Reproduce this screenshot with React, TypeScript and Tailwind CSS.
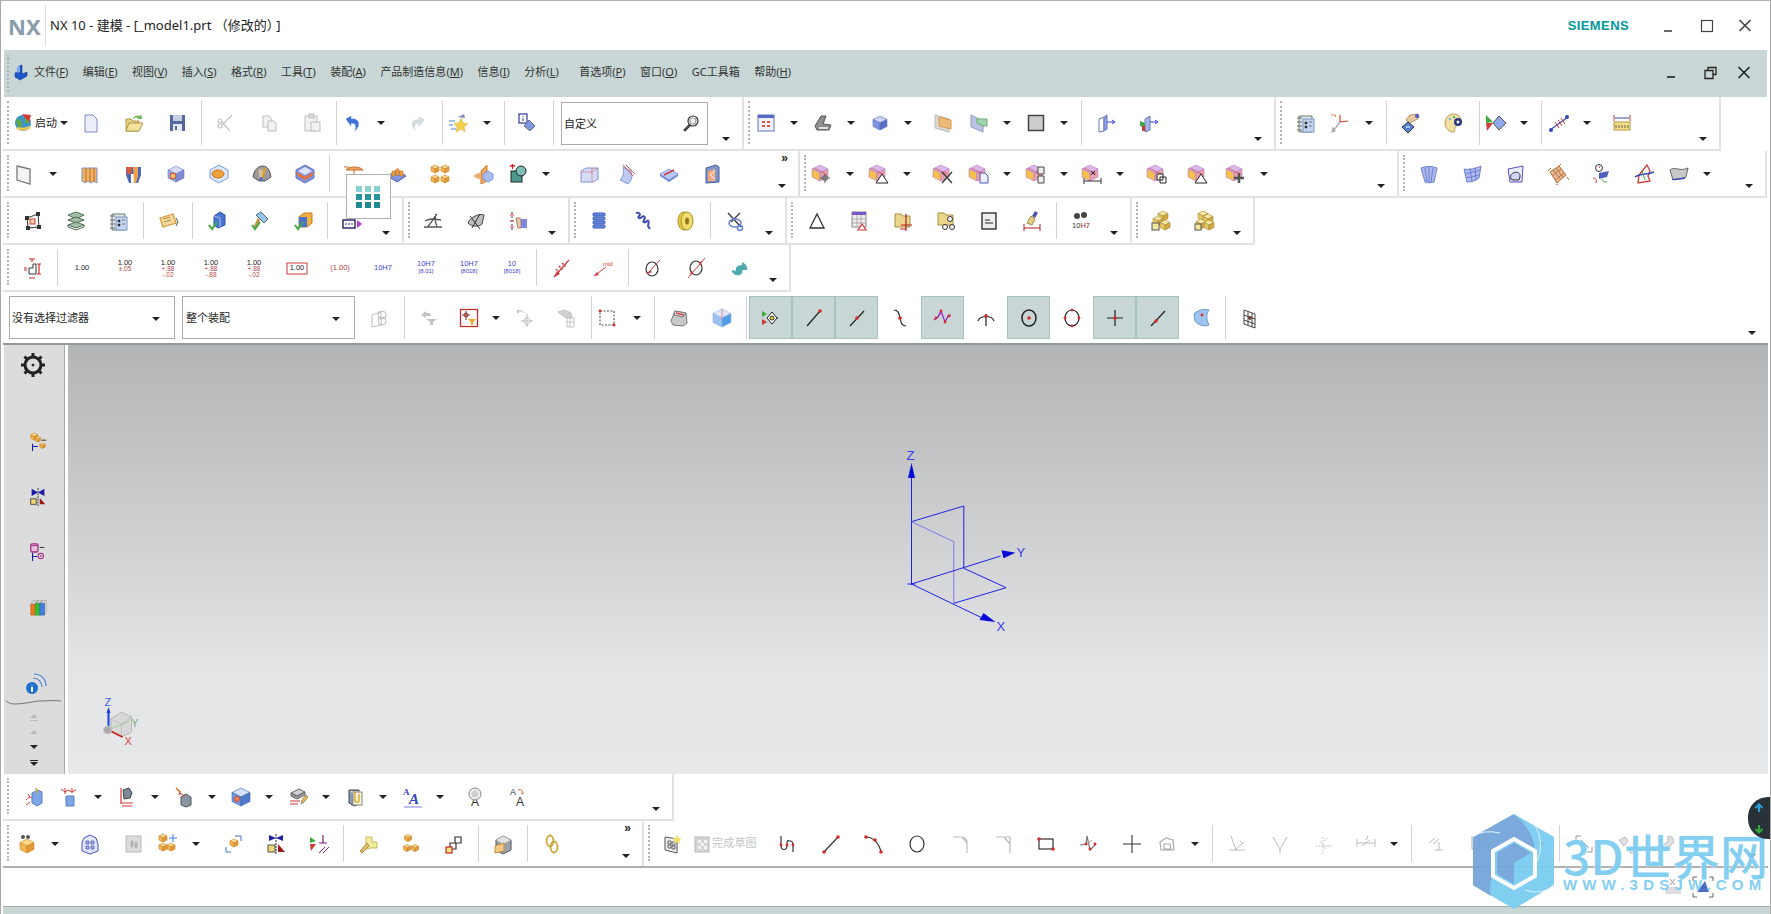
import type { ReactNode } from "react";

// flat colours used by most of the little bitmaps
const BL = "#7f96e0";
const BD = "#5a6fc4";
const BG = "#c9d4f6";
const RD = "#cf3b3b";
const GN = "#3fa93f";

function Cube({ x = 11, y = 11, s = 7, t = BG, l = BL, r = BD, st = BD }: { x?: number; y?: number; s?: number; t?: string; l?: string; r?: string; st?: string }) {
  const h = s / 2;
  return (
    <g stroke={st} strokeWidth="0.6" strokeLinejoin="round">
      <polygon fill={t} points={`${x},${y - s} ${x + s},${y - h} ${x},${y} ${x - s},${y - h}`} />
      <polygon fill={l} points={`${x - s},${y - h} ${x},${y} ${x},${y + s} ${x - s},${y + h}`} />
      <polygon fill={r} points={`${x + s},${y - h} ${x},${y} ${x},${y + s} ${x + s},${y + h}`} />
    </g>
  );
}

const OrangeCube = (x: number, y: number, s: number) => <Cube x={x} y={y} s={s} t="#fbd98a" l="#f3b552" r="#e39a35" st="#c9842a" />;
const YellowCube = (x: number, y: number, s: number) => <Cube x={x} y={y} s={s} t="#f7e9a5" l="#e8c860" r="#d2a93f" st="#a58a3a" />;

function Pc({ children }: { children?: ReactNode }) {
  return (
    <g>
      <Cube x={9} y={10} s={8} t="#d9b8ea" l="#f5c04e" r="#e8a0b0" st="#b67ac8" />
      <path d="M3 5l12 6" stroke={RD} strokeWidth="0.7" />
      {children}
    </g>
  );
}

const Check = <path d="M3 15l3 4 5-7" stroke={GN} strokeWidth="2" fill="none" />;
const Dot = (x: number, y: number, r = 1.4, c = "#d62a2a") => <circle cx={x} cy={y} r={r} fill={c} />;

function Dim({ a, b, c, box, color = "#222" }: { a: string; b?: string; c?: string; box?: boolean; color?: string }) {
  const y = b ? 8 : 13;
  return (
    <g fontFamily="Liberation Sans, sans-serif" textAnchor="middle">
      {box && <rect x="1" y="6" width="20" height="11" fill="none" stroke={RD} strokeWidth="1" />}
      <text x="11" y={y} fontSize="7.5" fill={color}>{a}</text>
      {b && <text x="11" y="14" fontSize="6.5" fill="#b04848">{b}</text>}
      {c && <text x="11" y="20" fontSize="6.5" fill="#b04848">{c}</text>}
    </g>
  );
}

const ICONS: Record<string, ReactNode> = {
  // row 1
  globe: (
    <g>
      <circle cx="10" cy="11" r="8" fill="#3f93c9" />
      <path d="M3 8c3-2 5 0 6 3s-2 6-4 5M12 4c3 1 5 5 4 8l-4-1z" fill="#5fa84a" />
      <path d="M9 2l9 1-2 7z" fill="#d8382f" />
      <path d="M3 17c5 3 11 2 15-1l-2-2c-4 2-8 2-11 1z" fill="#e9c85d" />
    </g>
  ),
  doc: <path d="M5 3h8l4 4v13H5z" fill="#eceefc" stroke="#7f86c9" />,
  open: (
    <g>
      <path d="M3 7h5l2 2h6v10H3z" fill="#e6cf80" stroke="#b09a4a" />
      <path d="M3 19l3-8h14l-4 8z" fill="#f3e19e" stroke="#b09a4a" />
      <path d="M10 6c2-3 5-3 7-2l1-2 1 5-5 0 1-1c-2-1-4 0-5 1z" fill="#73b35a" />
    </g>
  ),
  save: (
    <g>
      <rect x="4" y="3" width="15" height="16" fill="#56699f" />
      <rect x="7" y="3" width="9" height="6" fill="#c6cfe6" />
      <rect x="7" y="12" width="9" height="7" fill="#e7eaf4" />
      <rect x="9" y="14" width="2" height="4" fill="#56699f" />
    </g>
  ),
  cut: (
    <g stroke="#c4c4c4" fill="none" strokeWidth="1.2">
      <circle cx="5" cy="14" r="2" />
      <circle cx="5" cy="9" r="2" />
      <path d="M7 13l10-10M7 10l8 9" />
    </g>
  ),
  copy: (
    <g stroke="#bdbdbd" fill="#f2f2f2">
      <path d="M5 4h6l2 2v9H5z" />
      <path d="M10 9h6l2 2v8h-8z" />
    </g>
  ),
  paste: (
    <g stroke="#bdbdbd" fill="#f2f2f2">
      <rect x="4" y="4" width="12" height="15" />
      <rect x="8" y="2" width="5" height="4" fill="#dcdcdc" />
      <rect x="10" y="10" width="9" height="9" />
    </g>
  ),
  undo: <path d="M4 7l5-3v3c6-1 9 3 7 8l-3 4c1-3 2-8-4-8v3z" fill="#3d73d6" stroke="#6b96e6" strokeWidth=".5" />,
  redo: <path d="M18 8l-5-3v3C8 7 5 10 7 15l2 3c-1-3-1-7 4-7v3z" fill="#d6dde0" stroke="#c4c4c4" strokeWidth=".5" />,
  star: (
    <g>
      <path d="M13 6l2 5 5 .5-4 3.5 1 5-4-3-5 3 1-5-3-3.5 5-.5z" fill="#f3d24e" stroke="#d3ad2e" strokeWidth=".5" />
      <path d="M1 9h6M1 13h4M3 17h5" stroke="#7fb1e2" strokeWidth="1.5" />
      <path d="M10 5l6-3 1 4z" fill="#8a86c6" />
    </g>
  ),
  itag: (
    <g>
      <rect x="3" y="2" width="8" height="9" fill="#fff" stroke="#2d3a9c" strokeWidth="1.2" />
      <path d="M7 4v1M7 6v3" stroke="#2d3a9c" />
      <path d="M13 8l6 6-5 5-6-5z" fill="#7f96e0" stroke="#6a6a7a" />
    </g>
  ),
  fit: (
    <g>
      <rect x="3" y="3" width="16" height="16" fill="#eef1fd" stroke="#6072c0" />
      <rect x="3" y="3" width="16" height="3" fill="#5168c8" />
      <path d="M7 9h3v2H7zM12 9h3v2h-3zM7 13h3v2H7zM12 13h3v2h-3z" fill="#e8503f" />
    </g>
  ),
  scan: (
    <g>
      <path d="M3 14L9 4h5l-3 8 8 1-2 5H5z" fill="#8f8f8f" stroke="#555" />
      <path d="M7 15h9v2H7z" fill="#e0e0e0" />
    </g>
  ),
  cube: <Cube />,
  planeO: (
    <g>
      <path d="M3 3l14 4v13L3 16z" fill="#d8d8d8" stroke="#bbb" />
      <path d="M7 5l12 3v9L7 14z" fill="#eeb978" stroke="#d69a55" />
    </g>
  ),
  planeG: (
    <g>
      <path d="M3 3l12 6v11L3 15z" fill="#b9c3e2" stroke="#8f9ac0" />
      <path d="M9 7h10v7h-4l-6-3z" fill="#9fd6a8" stroke="#6ea97a" />
    </g>
  ),
  graysq: <rect x="3.5" y="3.5" width="15" height="15" fill="#cccccc" stroke="#444" strokeWidth="1.5" />,
  door1: (
    <g>
      <path d="M4 7l5-2v14l-5 1z" fill="#fff" stroke="#6a78b8" />
      <path d="M9 5l3-2v14l-3 2z" fill="#8ea0e8" stroke="#6a78b8" />
      <path d="M12 10h7M17 8l3 2-3 2" stroke="#3b3be0" fill="none" />
    </g>
  ),
  door2: (
    <g>
      <path d="M7 7l5-3v14l-5 2z" fill="#a3b3ee" stroke="#6a78b8" />
      <path d="M2 9l5 2v5l-5-2z" fill={GN} />
      <path d="M4 14h3v5H4z" fill={RD} />
      <path d="M12 10h7M17 8l3 2-3 2" stroke="#3b3be0" fill="none" />
    </g>
  ),
  list: (
    <g>
      <path d="M4 4h13v16H4z" fill="#dfe5ef" stroke="#6b7f6b" />
      <rect x="8" y="7" width="11" height="13" fill="#c4d3f0" stroke="#7f96c0" />
      <path d="M10 10h2v2h-2zM14 10h3M10 14h2v2h-2zM14 14h3" stroke="#555" strokeWidth=".7" />
      <path d="M2 6h5M2 10h5M2 14h5M2 18h5" stroke="#666" />
    </g>
  ),
  csys: (
    <g fill="none" strokeWidth="1.2">
      <path d="M11 10v-7M11 10l8-1" stroke="#d8402e" />
      <path d="M11 10l-6 8" stroke="#999" />
      <path d="M3 20l3-1-2-3z" fill="#aaa" stroke="#aaa" />
      <path d="M2 3h4l1 2" stroke="#e08a50" />
    </g>
  ),
  pdia: (
    <g>
      <path d="M10 3l8-1 1 4-9 5-4-3z" fill="#e9c9a0" stroke="#b59060" />
      <circle cx="17" cy="4" r="2" fill="#4e58c6" />
      <path d="M8 10l6 5-6 6-6-6z" fill="#5880d6" stroke="#334" />
      <path d="M6 15h4" stroke="#fff" />
    </g>
  ),
  palette: (
    <g>
      <path d="M10 2c6 0 9 4 8 9-1 3-5 2-6 4s1 5-2 5-8-3-8-9c0-5 4-9 8-9z" fill="#f0dfa4" stroke="#bb9c4a" />
      <circle cx="15" cy="10" r="4" fill="#2c3a86" />
      <circle cx="15" cy="10" r="1.5" fill="#fff" />
      <circle cx="7" cy="7" r="1.2" fill="#6cb7e0" />
      <circle cx="11" cy="5" r="1.2" fill="#62b76c" />
    </g>
  ),
  adia: (
    <g>
      <path d="M1 3l7 7-7 1z" fill={GN} />
      <path d="M1 11l7 0-6 8z" fill={RD} />
      <path d="M14 4l7 7-7 7-6-7z" fill="#8ea8ea" stroke="#555" />
    </g>
  ),
  dist: (
    <g>
      <path d="M2 18L20 5" stroke="#3346b8" strokeWidth="1.2" />
      <path d="M7 10l4 6M10 8l4 6M13 6l4 6" stroke={RD} />
      <circle cx="3" cy="18" r="2" fill="#3346b8" />
      <circle cx="19" cy="5" r="2" fill="#3346b8" />
    </g>
  ),
  ruler: (
    <g>
      <rect x="3" y="10" width="16" height="8" fill="#f4de8a" stroke="#b99b44" />
      <path d="M5 13v3M8 13v3M11 13v3M14 13v3M17 13v3" stroke="#333" strokeWidth=".7" />
      <path d="M3 3v6M19 3v6" stroke={RD} />
      <path d="M4 6h14" stroke="#3346b8" />
    </g>
  ),
  // row 2
  plane: <path d="M3 3l13 3v15L3 17z" fill="#f2f4f0" stroke="#777" strokeWidth="1.3" />,
  ribs: (
    <g>
      <path d="M3 5h15v15l-3-2-3 2-3-2-3 2-3-2z" fill="#f2b264" stroke="#7b93cf" />
      <path d="M7 5v14M11 5v14M15 5v14" stroke="#b96d26" />
    </g>
  ),
  shell: (
    <g>
      <path d="M4 4h15v8l-3 8h-4v-9H9v9H7L4 12z" fill="#4f68b8" />
      <path d="M11 4h5v9l-2 7h-2z" fill="#f0a24a" />
      <path d="M4 4h6l-1 7H5z" fill="#d85a3a" />
    </g>
  ),
  hole: (
    <g>
      <Cube s={8} t="#d6dcf6" l="#9aa8e6" r="#7e8cd6" st="#6c78c0" />
      <circle cx="8" cy="13" r="3" fill="#f0c06a" stroke={RD} />
    </g>
  ),
  hexO: (
    <g>
      <path d="M11 2l9 5v8l-9 5-9-5V7z" fill="#dce8fa" stroke="#7f9ee0" />
      <ellipse cx="10" cy="11" rx="6" ry="4" fill="#f2a03c" stroke="#c8701e" />
    </g>
  ),
  gauge: (
    <g>
      <path d="M2 14C3 6 8 3 12 3s7 4 8 11l-6 4H8z" fill="#9a9a9a" stroke="#555" />
      <path d="M8 6l4 1 0 9H8z" fill="#d8c0a0" />
      <path d="M14 5l-3 11" stroke="#e0a020" strokeWidth="2" />
      <circle cx="10" cy="16" r="2" fill="#5a70c8" />
    </g>
  ),
  chev: (
    <g>
      <path d="M11 2l9 5v8l-9 5-9-5V7z" fill="#8293dd" stroke="#6272c0" />
      <path d="M11 4l7 4-7 4-7-4z" fill="#dfe4fa" />
      <path d="M3 9l8 5 8-5v3l-8 5-8-5z" fill="#ec6f30" />
    </g>
  ),
  umbrella: (
    <g>
      <path d="M3 7c3-4 14-4 17 0z" fill="#f2a060" stroke="#c8702e" />
      <path d="M11 7v9" stroke="#c8702e" />
      <path d="M8 15h6l-3 5z" fill="#e85a30" />
      <path d="M1 4h5" stroke="#c8702e" />
    </g>
  ),
  bumps: (
    <g>
      <path d="M2 13l9-6 9 6-9 6z" fill="#7f96e0" stroke="#4a5ab0" />
      <path d="M6 8h3v5H6zM10 6h3v6h-3zM14 8h3v5h-3z" fill="#f2a03c" stroke="#c4741e" strokeWidth=".6" />
    </g>
  ),
  four: (
    <g>
      {OrangeCube(6, 6, 4)}
      {OrangeCube(16, 6, 4)}
      {OrangeCube(6, 16, 4)}
      {OrangeCube(16, 16, 4)}
    </g>
  ),
  halves: (
    <g>
      <path d="M9 8l6-6v16l-6 3z" fill="#f2a660" stroke="#d07a30" />
      <path d="M2 12l7-3v8l-7-3z" fill="#f0b070" />
      <path d="M11 11l5-3 5 3v5l-5 3-5-3z" fill="#a8bcee" stroke="#7f96e0" />
    </g>
  ),
  seed: (
    <g>
      <rect x="3" y="8" width="11" height="11" fill="#4a9a90" stroke="#222" />
      <circle cx="13" cy="8" r="5" fill="#7cc0b8" stroke="#222" />
      <path d="M2 3h5M4.500 1v5" stroke="#d82020" strokeWidth="1.3" />
    </g>
  ),
  boxred: (
    <g>
      <path d="M3 8l5-3h12v11l-5 3H3z" fill="#d3dcf8" stroke="#7f8fd8" />
      <path d="M14 5v14M20 5l-6 4H3" stroke="#e06060" strokeDasharray="1.500 1" fill="none" />
    </g>
  ),
  sail: (
    <g>
      <path d="M5 17c4-4 4-9 3-13l8 4c2 5 1 9-3 13z" fill="#bccaf4" stroke="#7f96e0" />
      <path d="M8 2l10 11M11 2l9 9" stroke="#d85a50" />
    </g>
  ),
  slab: (
    <g>
      <path d="M2 11l9-5 9 5-9 6z" fill="#b9c8f4" stroke="#8f9fe0" />
      <path d="M6 12l10-5" stroke={RD} strokeWidth="1.5" />
      <path d="M2 11v2l9 6 9-6v-2l-9 6z" fill="#6f86dc" />
    </g>
  ),
  frame: (
    <g>
      <path d="M5 5l10-3 3 2v15l-13 1z" fill="#7f96cc" stroke="#4a5a9a" />
      <path d="M7 8l7-2v12H7z" fill="#f4a878" />
      <path d="M14 8l-5 4 5 4" stroke="#fff" fill="none" />
    </g>
  ),
  pcMove: <Pc><path d="M14 11v9M9 15h10M12 13h4v4h-4z" stroke="#555" fill="#fff" /></Pc>,
  pcTri: <Pc><path d="M14 11l6 9H8z" fill="#fff" stroke="#222" /></Pc>,
  pcX: <Pc><path d="M10 9l10 11M20 9L10 20" stroke="#444" strokeWidth="1.5" /></Pc>,
  pcDoc: <Pc><path d="M12 10h5l3 3v7h-8z" fill="#eef" stroke="#4a5ab0" /></Pc>,
  pcBox: <Pc><path d="M13 4h6v7h-6zM13 13h6v7h-6z" fill="#eee" stroke="#444" /></Pc>,
  pcDim: <Pc><path d="M3 18h17M3 15v6M20 15v6" stroke="#333" /><path d="M10 8l4 4M14 8l-4 4" stroke="#333" /></Pc>,
  pcFrame: <Pc><path d="M11 11h6v6h-6zM14 14h6v6h-6z" fill="#fff" stroke="#222" /></Pc>,
  pcPlus: <Pc><path d="M14 10v10M9 15h10" stroke="#555" strokeWidth="2.500" /></Pc>,
  sf1: (
    <g>
      <path d="M3 5c5-2 11-2 16 0l-3 14c-3 1-6 1-9 0z" fill="#aab8ee" stroke="#6f80cc" />
      <path d="M7 5l2 14M11 4v15M15 5l-2 14" stroke="#5a6cc0" strokeWidth=".7" />
    </g>
  ),
  sf2: (
    <g>
      <path d="M3 6c5 1 11 0 17-3l-2 12c-3 3-9 4-12 4z" fill="#aab8ee" stroke="#6f80cc" />
      <path d="M4 11l15-4M5 15l13-3M9 5l2 14M14 4l1 13" stroke="#5a6cc0" strokeWidth=".7" />
    </g>
  ),
  sf3: (
    <g>
      <path d="M4 6l15-3-1 16H6z" fill="#e7ebfb" stroke="#5a4fcf" />
      <path d="M7 16c-3-7 10-10 9-2l-1 3H9z" fill="#cfd6f6" stroke="#333" />
    </g>
  ),
  mesh: (
    <g>
      <path d="M3 9l9-6 7 9-9 8z" fill="#e8b88e" stroke="#b07040" />
      <path d="M6 7l7 9M9 5l7 9M5 13l9-7M8 17l9-7" stroke="#a05a30" strokeWidth=".7" />
      <path d="M1 8l3-3M20 14l2 3M11 21l-2 1M14 1l-2 2" stroke="#e06020" />
    </g>
  ),
  tool: (
    <g>
      <circle cx="9" cy="5" r="3.500" fill="#fff" stroke="#333" />
      <path d="M9 5l1-2" stroke={RD} />
      <path d="M9 10l10-2-2 6-8 2z" fill="#5060c0" />
      <path d="M3 15c3 0 4 2 3 5" stroke={RD} fill="none" />
      <path d="M12 16c1 3 3 3 5 3" stroke={GN} fill="none" />
    </g>
  ),
  rbl: (
    <g>
      <path d="M5 20l1-8 8-10 3 6-2 5 2 5z" fill="#fff" stroke={RD} strokeWidth="1.300" />
      <path d="M2 14c6-4 12-2 19-5" stroke="#3346b8" strokeWidth="1.500" fill="none" />
      <path d="M9 8l3 9" stroke={GN} />
    </g>
  ),
  wave: (
    <g>
      <path d="M2 7c5-4 10 2 18-2l-2 9c-4 4-9 0-13 3z" fill="#c8c8c8" stroke="#666" />
      <path d="M4 16c4 2 8-1 13-1" stroke="#3346b8" strokeWidth="1.300" fill="none" />
    </g>
  ),
  // row 3
  nodes: (
    <g>
      <path d="M5 8l11-4 1 13-11 1z" fill="none" stroke="#333" />
      <path d="M3 6h4v4H3zM14 2h4v4h-4zM15 15h4v4h-4zM4 16h4v4H4z" fill="#333" />
      <rect x="8" y="9" width="5" height="5" fill="#f6d2a6" stroke={RD} />
    </g>
  ),
  stack: (
    <g fill="#a4bfa6" stroke="#4e6a58">
      <path d="M3 5l8-3 8 3-8 4z" />
      <path d="M3 10l8 3 8-3-8-3z" />
      <path d="M3 15l8 3 8-3-8-3z" />
      <path d="M3 15v2l8 3 8-3v-2" fill="none" />
    </g>
  ),
  ticket: (
    <g>
      <path d="M3 8l13-4 3 9-13 4z" fill="#f5d8a0" stroke="#d69a3a" strokeWidth="1.300" />
      <path d="M6 9l7-2M7 12l7-2" stroke="#b08a40" />
      <path d="M19 8l2 4-2 4" stroke="#555" fill="none" />
    </g>
  ),
  chk1: (
    <g>
      <path d="M8 6l6-4 5 3v10l-7 3-4-3z" fill="#4a74d0" stroke="#2e4fa8" />
      <path d="M8 6l6 2v9" stroke="#a8c0f0" fill="none" />
      {Check}
    </g>
  ),
  chk2: (
    <g>
      <path d="M7 5l5-3 7 7-4 4z" fill="#9cc4e6" stroke="#4a6a90" />
      <path d="M10 9l-4 8" stroke="#c8924a" strokeWidth="3" />
      {Check}
    </g>
  ),
  chk3: (
    <g>
      <path d="M7 7l5-4h8v10l-5 4H7z" fill="#f2b13c" stroke="#c07c20" />
      <path d="M7 7h8v10H7z" fill="#4a74d0" />
      {Check}
    </g>
  ),
  term: (
    <g>
      <path d="M4 3l3 5h8l-2-5z" fill="#f0c460" />
      <rect x="2" y="10" width="12" height="8" fill="#fff" stroke="#2a2a70" strokeWidth="1.500" />
      <path d="M4 14h2M7 14h2M10 14h2" stroke="#2a2a70" />
      <path d="M16 10l5 4-5 4z" fill="#b040d0" />
    </g>
  ),
  a1: <path d="M2 17h18M6 16c3-2 6-9 9-12M14 4c-1 4-1 9 1 12M3 11c5-3 10-2 16-1" stroke="#555" strokeWidth="1.300" fill="none" />,
  a2: (
    <g>
      <path d="M3 13c2-6 12-10 16-8l-2 9c-3 3-10 3-14-1z" fill="#c0c0c0" stroke="#444" />
      <path d="M5 6l10 13M15 4L7 18" stroke="#333" />
    </g>
  ),
  hand: (
    <g>
      <path d="M4 2v18" stroke="#333" strokeDasharray="2 2" />
      <path d="M2 5h4M2 11h4M2 17h4" stroke={RD} />
      <path d="M8 8h4l1 2v8h-3z" fill="#e8c6a0" stroke="#a88060" />
      <rect x="13" y="9" width="6" height="9" fill="#7f86e0" />
    </g>
  ),
  db: (
    <g stroke="#3858b8" fill="#6a8ce0">
      <rect x="5" y="3" width="12" height="3" rx="1" />
      <rect x="5" y="7" width="12" height="3" rx="1" />
      <rect x="5" y="11" width="12" height="3" rx="1" />
      <rect x="5" y="15" width="12" height="3" rx="1" />
    </g>
  ),
  spring: <path d="M5 3c3-1 5 1 3 3s1 3 3 1 4 0 2 3 1 3 3 1 2 2 1 5l2 3" stroke="#3f4fb0" strokeWidth="2" fill="none" />,
  washer: (
    <g>
      <ellipse cx="10" cy="11" rx="6" ry="9" fill="#e8cc3c" stroke="#a88f20" />
      <ellipse cx="13" cy="11" rx="6" ry="9" fill="#f0dc70" stroke="#a88f20" />
      <ellipse cx="13" cy="11" rx="2" ry="3.500" fill="#8c7a20" />
    </g>
  ),
  scis: (
    <g fill="none" strokeWidth="1.500">
      <path d="M4 3l13 14" stroke="#444" />
      <path d="M16 3L7 12" stroke="#444" />
      <ellipse cx="11" cy="13" rx="6" ry="4" stroke="#6a84d8" />
      <circle cx="16" cy="18" r="2.500" stroke="#6a84d8" />
    </g>
  ),
  tri: <path d="M11 4l7 14H4z" fill="none" stroke="#333" strokeWidth="1.300" />,
  table: (
    <g>
      <rect x="3" y="2" width="14" height="15" fill="#eee" stroke="#888" />
      <rect x="3" y="2" width="14" height="3" fill="#7a55c8" />
      <path d="M3 9h14M3 13h14M8 5v12M12 5v12" stroke="#999" strokeWidth=".7" />
      <path d="M13 14l4 6H9z" fill="#fff" stroke={RD} strokeWidth="1.200" />
    </g>
  ),
  fcross: (
    <g>
      <path d="M3 4h6l2 2h7v11H3z" fill="#ead58a" stroke="#a88f40" />
      <path d="M14 4v17M9 15h11M8 19h6" stroke="#b02020" strokeWidth="1.200" />
    </g>
  ),
  fcirc: (
    <g>
      <path d="M3 3h6l2 2h7v10H3z" fill="#ead58a" stroke="#a88f40" />
      <circle cx="10" cy="17" r="2.500" fill="#fff" stroke="#333" />
      <circle cx="17" cy="17" r="2.500" fill="#fff" stroke="#333" />
      <circle cx="15" cy="9" r="2.500" fill="#fff" stroke="#333" />
    </g>
  ),
  note: (
    <g>
      <rect x="4" y="3" width="14" height="16" fill="#eee" stroke="#222" strokeWidth="1.300" />
      <path d="M7 10h5M7 13h8" stroke="#222" />
    </g>
  ),
  brush: (
    <g>
      <path d="M14 1l3 2-3 5-3-2z" fill="#4a58b0" />
      <path d="M10 6l4 3-3 6-5-2z" fill="#e6d08a" stroke="#a08a40" />
      <path d="M3 14v7M19 14v7M3 18h16" stroke="#b02020" />
    </g>
  ),
  bino: (
    <g fontFamily="Liberation Sans, sans-serif">
      <circle cx="7" cy="6" r="3" fill="#444" />
      <circle cx="14" cy="5" r="3" fill="#444" />
      <text x="11" y="18" fontSize="7.500" textAnchor="middle" fill="#333">10<tspan fill="#b02020">H7</tspan></text>
    </g>
  ),
  y2: (
    <g>
      {YellowCube(13, 6, 5)}
      {YellowCube(8, 11, 5)}
      {YellowCube(15, 15, 5)}
      <rect x="2" y="13" width="7" height="7" fill="#f0e8a0" stroke="#555" />
    </g>
  ),
  y3: (
    <g>
      {YellowCube(10, 6, 5)}
      {YellowCube(15, 9, 5)}
      {YellowCube(8, 14, 5)}
      {YellowCube(16, 15, 5)}
      <rect x="2" y="14" width="6" height="6" fill="#f0e8a0" stroke="#555" />
    </g>
  ),
  // row 4
  dimr: (
    <g stroke="#d02a2a" fill="none">
      <path d="M7 17h7V7h-3v4H7z" stroke="#333" />
      <path d="M7 2h6M10 2v3M7 21h6M17 7v10M15 7h4M15 17h4M2 11h3M2 13h3" strokeWidth="1.200" />
    </g>
  ),
  d0: <Dim a="1.00" />,
  d1: <Dim a="1.00" b="±.05" />,
  d2: <Dim a="1.00" b="+.88" c="-.02" />,
  d3: <Dim a="1.00" b="+.88" c="-.88" />,
  d4: <Dim a="1.00" b="+.88" c="-.02" />,
  d5: <Dim a="1.00" box />,
  d6: <Dim a="(1.00)" color="#b04040" />,
  d7: <Dim a="10H7" color="#3f3fd0" />,
  d8: (
    <g fontFamily="Liberation Sans, sans-serif" textAnchor="middle" fill="#3f3fd0">
      <text x="11" y="9" fontSize="7.500">10H7</text>
      <text x="11" y="16" fontSize="6">[8.01]</text>
    </g>
  ),
  d9: (
    <g fontFamily="Liberation Sans, sans-serif" textAnchor="middle" fill="#3f3fd0">
      <text x="11" y="9" fontSize="7.500">10H7</text>
      <text x="11" y="16" fontSize="6">[8018]</text>
    </g>
  ),
  d10: (
    <g fontFamily="Liberation Sans, sans-serif" textAnchor="middle" fill="#3f3fd0">
      <text x="11" y="9" fontSize="7.500">10</text>
      <text x="11" y="16" fontSize="6">[8018]</text>
    </g>
  ),
  rd1: (
    <g>
      <path d="M4 20L19 3" stroke={RD} strokeWidth="1.200" />
      <path d="M4 20l6-3-3-3z" fill={RD} />
      <path d="M9 9l4 4M12 6l4 4M6 12l3 3" stroke={RD} strokeWidth="1.500" strokeDasharray="2 1" />
    </g>
  ),
  rd2: (
    <g fontFamily="Liberation Sans, sans-serif" fill={RD}>
      <path d="M1 19L13 10" stroke={RD} />
      <path d="M1 19l5-1-2-3z" />
      <text x="10" y="9" fontSize="6">mid</text>
    </g>
  ),
  circd: (
    <g>
      <ellipse cx="10" cy="12" rx="6" ry="7" fill="none" stroke="#333" strokeWidth="1.200" />
      <path d="M5 17L18 3" stroke={RD} />
      <path d="M6 17l4-2-2-2z" fill={RD} />
    </g>
  ),
  circd2: (
    <g>
      <ellipse cx="11" cy="11" rx="6" ry="7" fill="none" stroke="#333" strokeWidth="1.200" />
      <path d="M3 21L20 1" stroke={RD} />
      <path d="M14 7l3-4-1 5zM8 15l-3 4 1-5z" fill={RD} />
    </g>
  ),
  back: <path d="M14 5v3c-5 0-7 3-6 6l-4-1c0 4 4 6 8 5 2-1 3-3 2-5h5c1-3-1-6-5-8z" fill="#4faab0" />,
  // row 5
  comboF: (
    <g stroke="#bbb" fill="none">
      <path d="M3 8l9-3v13l-9 2z" />
      <circle cx="13" cy="8" r="4" />
      <circle cx="13" cy="14" r="4" />
    </g>
  ),
  fu: (
    <g fill="#c4c4c4">
      <path d="M9 16h11l-4 3v3h-3v-3z" transform="translate(-1 -4)" />
      <path d="M3 8l5-4v2c3-1 5 1 5 3H8v2z" />
    </g>
  ),
  fr: (
    <g>
      <rect x="2.500" y="2.500" width="17" height="17" fill="#fff" stroke="#c03030" strokeWidth="1.300" />
      <path d="M8 4v9M4 8h8" stroke="#903030" />
      <circle cx="8" cy="8" r="2" fill="none" stroke="#903030" />
      <path d="M10 12h8l-3 3v3h-2v-3z" fill="#efa820" />
    </g>
  ),
  fb: (
    <g stroke="#bbb" fill="none">
      <path d="M4 6c1-3 5-3 6 0M4 6l-1-3 3 1" />
      <path d="M13 7v13M7 14h12" />
      <path d="M13 10l4 4-4 4-4-4z" />
    </g>
  ),
  fh: (
    <g fill="#d0d0d0" stroke="#c0c0c0">
      <path d="M3 5l7-2 6 3 1 4-6 1z" />
      <path d="M12 11h7v9h-7zM12 15h7M15 11v9" fill="none" />
    </g>
  ),
  dash: (
    <g>
      <rect x="4" y="4" width="14" height="14" fill="none" stroke="#444" strokeDasharray="2 1.500" />
      {Dot(4, 4)}
      {Dot(18, 18)}
    </g>
  ),
  gbox: (
    <g>
      <path d="M3 14L7 4l11 2 1 10-4 3-10-1z" fill="#c8c8cc" stroke="#777" />
      <path d="M7 4l11 2-3 4-9-2z" fill="#e4e4e8" stroke="#777" />
      <path d="M8 6l8 2" stroke="#d04040" strokeWidth="1.300" />
    </g>
  ),
  bbox: (
    <g>
      <Cube s={9} t="#dfe7f8" l="#9cc0f0" r="#4f9ce8" st="#8fb0e0" />
      <path d="M11 2v10" stroke="#e88090" />
    </g>
  ),
  t1: (
    <g>
      <path d="M8 11h2M15 11h3" stroke="#222" />
      <path d="M12 5l5 6-5 6-5-6z" fill="#fff" stroke="#222" />
      <path d="M2 4l5 3-5 3z" fill={GN} />
      <path d="M2 12l5 3-5 3z" fill={RD} />
      <circle cx="12" cy="11" r="2" fill="#e8d020" stroke="#333" />
    </g>
  ),
  t2: <g><path d="M4 19L17 4" stroke="#222" strokeWidth="1.200" />{Dot(17, 4, 1.800)}</g>,
  t3: <g><path d="M4 19L18 4" stroke="#222" strokeWidth="1.200" />{Dot(11, 11, 1.800)}</g>,
  t4: <g><path d="M5 3c4 0 5 3 6 8s2 8 6 8" stroke="#222" strokeWidth="1.200" fill="none" />{Dot(11, 11, 1.800)}</g>,
  t5: (
    <g>
      <path d="M2 13l4-3 3-6 4 11 3-6 3-1" stroke="#a020c0" strokeWidth="1.200" fill="none" />
      <path d="M5 11l5-6" stroke="#a020c0" />
      {Dot(4, 11)}{Dot(9, 4)}{Dot(13, 15)}{Dot(17, 9)}
    </g>
  ),
  t6: <g><path d="M3 14c2-6 14-6 16 0M11 7v12" stroke="#222" strokeWidth="1.200" fill="none" />{Dot(11, 9, 1.800)}</g>,
  t7: <g><ellipse cx="11" cy="11" rx="7" ry="8" fill="none" stroke="#222" strokeWidth="1.500" />{Dot(11, 11, 1.800)}</g>,
  t8: <g><ellipse cx="11" cy="11" rx="7" ry="8" fill="none" stroke="#222" strokeWidth="1.200" />{Dot(11, 3)}{Dot(11, 19)}{Dot(4, 11)}{Dot(18, 11)}</g>,
  t9: <g><path d="M3 11h16M11 3v16" stroke="#222" strokeWidth="1.200" />{Dot(11, 11, 1.800)}</g>,
  t10: <g><path d="M4 19L18 4" stroke="#222" strokeWidth="1.200" />{Dot(9, 14, 1.800)}</g>,
  surfpt: (
    <g>
      <path d="M4 7c5-5 12-5 15-4-3 4-3 9 0 15C14 20 8 18 5 14z" fill="#9cc4ee" stroke="#6a96cc" />
      {Dot(12, 8)}
    </g>
  ),
  grid: (
    <g stroke="#444" fill="none">
      <path d="M5 3l11 4v14L5 17z" />
      <path d="M5 8l11 4M5 13l11 4M9 4v14M13 6v14" />
      {Dot(11, 11)}
    </g>
  ),
  // row 6
  q1: (
    <g>
      <path d="M8 7l6-3 4 2v11l-5 3-5-3z" fill="#7fa5e6" stroke="#5a7fc4" />
      <path d="M12 2l1 5" stroke="#c8b030" strokeWidth="1.500" />
      <path d="M2 14c2-3 4-3 6-2M4 8l2 3M2 19l4-3" stroke={RD} fill="none" />
    </g>
  ),
  q2: (
    <g>
      <path d="M8 10h8v10H8z" fill="#7fa5e6" stroke="#5a7fc4" />
      <path d="M3 3l4 3 3-2 4 2 4-2M7 2v6M14 2v5" stroke={RD} fill="none" />
    </g>
  ),
  q3: (
    <g>
      <path d="M7 4l6-2 3 5-2 5-6 1z" fill="#7d8898" stroke="#444" />
      <path d="M5 2v16M5 17h12M6 20h10" stroke={RD} strokeWidth="1.200" />
    </g>
  ),
  q4: (
    <g>
      <path d="M3 2l4 4-1 3" stroke="#e07020" strokeWidth="1.500" fill="none" />
      <path d="M8 11l5-3 5 3v8l-5 2-5-2z" fill="#8a96a4" stroke="#555" />
      <path d="M6 7l6 3" stroke={RD} />
    </g>
  ),
  q5: (
    <g>
      <Cube x={11} y={11} s={9} t="#d7e2f8" l="#6f9ae0" r="#4f7ac8" st="#3a5fa8" />
      <circle cx="7" cy="13" r="2.500" fill="#f08a50" stroke={RD} />
    </g>
  ),
  erase: (
    <g>
      <path d="M4 7l8-4 6 3-8 4z" fill="#d0d0d0" stroke="#666" />
      <path d="M4 7v3l6 3 8-4V6l-8 4z" fill="#9a9a9a" stroke="#666" />
      <path d="M3 15h10M3 18h8" stroke={RD} strokeWidth="1.200" />
      <path d="M14 18l1-4 4-5 2 2-4 5z" fill="#e8c04a" stroke="#555" strokeWidth=".6" />
    </g>
  ),
  q6: (
    <g>
      <path d="M5 4h10l1 14-6 2-5-3z" fill="#8a9cb0" stroke="#444" />
      <path d="M6 5l9 0 3 3-9 0z" fill="#ddd" />
      <rect x="9" y="6" width="9" height="13" fill="#f5f1da" stroke="#888" />
      <path d="M11 6v8c0 3 4 3 4 0V8" stroke="#d8b030" strokeWidth="1.500" fill="none" />
    </g>
  ),
  q7: (
    <g fontFamily="Liberation Serif, serif" fontWeight="700">
      <text x="2" y="9" fontSize="9" fill="#3346b8">A</text>
      <text x="8" y="18" fontSize="15" fontStyle="italic" fill="#3346b8">A</text>
      <path d="M3 21h18" stroke="#7a80d8" />
    </g>
  ),
  q8: (
    <g fontFamily="Liberation Sans, sans-serif">
      <text x="11" y="20" fontSize="12" textAnchor="middle" fill="#333">A</text>
      <circle cx="11" cy="8" r="6" fill="#eee" stroke="#888" />
      <circle cx="11" cy="8" r="3.500" fill="#d0d0d0" />
    </g>
  ),
  q9: (
    <g fontFamily="Liberation Sans, sans-serif" fill="#333">
      <text x="6" y="9" fontSize="9" textAnchor="middle">A</text>
      <text x="13" y="20" fontSize="12" textAnchor="middle">A</text>
      <path d="M11 4c3-1 5 0 5 4l-2-1" stroke="#d86030" fill="none" />
    </g>
  ),
  // row 7
  bk: (
    <g>
      <circle cx="7" cy="4" r="2" fill="#555" />
      <circle cx="12" cy="4" r="2" fill="#555" />
      {OrangeCube(11, 13, 7)}
    </g>
  ),
  net: (
    <g stroke="#4a50b8" fill="#e2e6fa">
      <path d="M5 5l6-3 6 3 2 6v7l-8 3-8-3V9z" />
      <path d="M7 8h3v3H7zM12 8h3v3h-3zM7 13h3v3H7zM12 13h3v3h-3z" fill="#aab0d8" strokeWidth=".7" />
    </g>
  ),
  gpage: (
    <g fill="#dcdcdc" stroke="#bbb">
      <rect x="4" y="3" width="15" height="16" />
      <path d="M9 14V8h2v6zM13 15V9h2v6z" fill="#aaa" />
    </g>
  ),
  cplus: (
    <g>
      {OrangeCube(6, 5, 4)}
      {OrangeCube(6, 14, 4)}
      {OrangeCube(14, 14, 4)}
      <path d="M12 5h8M16 1v8" stroke="#3f7fe0" />
    </g>
  ),
  corner: (
    <g>
      {OrangeCube(12, 10, 4)}
      <path d="M4 14v5h5M13 3h6v5" stroke="#3f70c8" fill="none" />
    </g>
  ),
  mirror: (
    <g>
      <path d="M4 2l7 3 7-3v6l-7-3-7 3z" fill="#2020a8" />
      <path d="M11 1v20" stroke="#222" strokeDasharray="2 1" />
      <rect x="3" y="12" width="7" height="7" fill="#f0d870" stroke="#555" />
      <path d="M13 19V11l7 8z" fill="#9a1a1a" />
    </g>
  ),
  perp: (
    <g>
      <path d="M2 4l6 4-6 2z" fill={GN} />
      <path d="M2 11l6 0-5 7z" fill={RD} />
      <path d="M15 2v8M11 10h8" stroke="#802080" strokeWidth="1.200" />
      <path d="M11 20l6-6M15 20l6-6" stroke="#802080" />
    </g>
  ),
  pipe: (
    <g>
      <path d="M9 4h6v5h5v6h-6l-5 1z" fill="#f0ec9a" stroke="#c4bc60" />
      <path d="M3 18l7-8 2 3-7 7z" fill="#dcc070" stroke="#a88f40" />
    </g>
  ),
  c3: (
    <g>
      {OrangeCube(8, 5, 3.500)}
      {OrangeCube(7, 15, 3.500)}
      {OrangeCube(15, 15, 3.500)}
    </g>
  ),
  link: (
    <g>
      <path d="M12 4h6v6h-6zM7 10h6v6H7z" fill="#fff" stroke="#333" strokeWidth="1.200" />
      <rect x="3" y="14" width="6" height="6" fill="#f0e88a" stroke="#d02020" strokeWidth="1.200" />
    </g>
  ),
  drawer: (
    <g>
      <path d="M4 7l7-4 8 4v10l-8 4-7-4z" fill="#9aa0a8" stroke="#555" />
      <path d="M4 7l7 4 8-4-8-4z" fill="#e0e0e0" />
      <path d="M3 13l9-3v8l-9 2z" fill="#f2c888" stroke="#c88a40" />
    </g>
  ),
  rings: (
    <g fill="none" stroke="#c8a838" strokeWidth="1.800">
      <ellipse cx="9" cy="8" rx="3.500" ry="5.500" />
      <ellipse cx="13" cy="14" rx="3.500" ry="5.500" />
    </g>
  ),
  sk: (
    <g>
      <path d="M3 4l12 2v14L3 17z" fill="#eee" stroke="#555" />
      <path d="M6 8h3v3H6zM10 9h3v3h-3zM6 12h3v3H6zM10 13h3v3h-3z" stroke="#444" fill="none" strokeWidth=".8" />
      <path d="M15 2l1.500 3 3 .5-2 2 .5 3-3-1.500-3 1.500.5-3-2-2 3-.5z" fill="#efe36a" />
    </g>
  ),
  s1: (
    <g>
      <path d="M4 3v9c0 6 6 6 6 0s1-4 3-4 3 2 3 4v7" stroke="#333" strokeWidth="1.200" fill="none" />
      {Dot(4, 12)}{Dot(10, 12)}{Dot(16, 12)}
    </g>
  ),
  s2: <g><path d="M4 19L18 4" stroke="#333" strokeWidth="1.200" />{Dot(4, 19, 1.800)}{Dot(18, 4, 1.800)}</g>,
  s3: <g><path d="M3 4c7 0 13 6 15 15" stroke="#333" strokeWidth="1.200" fill="none" />{Dot(3, 4, 1.800)}{Dot(12, 7, 1.800)}{Dot(18, 19, 1.800)}</g>,
  s4: <ellipse cx="11" cy="11" rx="7" ry="8" fill="none" stroke="#333" strokeWidth="1.200" />,
  s5: <path d="M4 4h8c4 0 6 2 6 6v10M13 4l5 6" stroke="#bbb" strokeWidth="1.200" fill="none" strokeDasharray="8 .5" />,
  s6: <path d="M4 4h14v16M12 4l6 7" stroke="#bbb" strokeWidth="1.200" fill="none" />,
  s7: <g><rect x="4" y="6" width="14" height="10" fill="none" stroke="#333" strokeWidth="1.200" />{Dot(4, 6, 1.800)}{Dot(18, 16, 1.800)}</g>,
  s8: (
    <g>
      <path d="M2 12l6-1 1-8 3 14 6-6" stroke="#777" strokeWidth="1.200" fill="none" />
      <path d="M8 12l6-5" stroke="#aaa" />
      {Dot(8, 11)}{Dot(12, 16)}{Dot(17, 11)}
    </g>
  ),
  s9: <path d="M2 11h18M11 2v18" stroke="#333" strokeWidth="1.100" />,
  s10: <path d="M4 9l6-4 7 2 1 10H5zM8 11h6l1 5H8z" stroke="#aaa" strokeWidth="1.200" fill="none" />,
  g1: <path d="M5 3l5 14h9M3 17h7M8 18l10-9M14 8l3 3" stroke="#bbb" fill="none" />,
  g2: <path d="M4 4l7 12 7-12M11 16v5" stroke="#bbb" fill="none" />,
  g3: <path d="M3 13h18M11 4v17M8 8l6 8M15 5l-2 3" stroke="#c8c8c8" fill="none" strokeDasharray="2 1" />,
  g4: <path d="M2 6v8M20 6v8M2 10h18M7 13l8-6M13 3l-2 4" stroke="#bbb" fill="none" />,
  g5: <path d="M4 10l6-5M8 11l6-5M14 9v8M10 17h8" stroke="#bbb" fill="none" />,
  g6: <path d="M3 3v13h3M19 3v13h-3M11 3v9M6 6h5M11 6h5" stroke="#aaa" fill="none" />,
  g7: <path d="M3 5l8 6-8 6zM14 3v11M9 16h10" stroke="#b9b9b9" fill="#ddd" />,
  g8: <path d="M3 3h5M3 3v5M19 19h-5M19 19v-5M8 7l8 8" stroke="#999" fill="none" />,
  g9: <path d="M3 7l6-3 3 4-4 5zM14 15h6v5h-6z" stroke="#bbb" fill="#e0e0e0" />,
  g10: <path d="M11 3c5 0 7 4 5 7l-8 8-4-3c2-1 3-5 7-6z" stroke="#bbb" fill="#e0e0e0" />,
  // side panel
  treeCubes: (
    <g>
      {OrangeCube(7, 5, 4)}
      {OrangeCube(11, 8, 3)}
      {OrangeCube(16, 15, 3)}
      <path d="M15 9h5" stroke="#222" />
      <path d="M5 13v8M5 16h6" stroke="#1a1aa8" strokeWidth="1.200" fill="none" />
    </g>
  ),
  sideMirror: (
    <g>
      <path d="M4 2l7 4 7-4v8l-7-4-7 4z" fill="#1a1aa8" />
      <path d="M11 1v20" stroke="#222" strokeDasharray="2 1" />
      <rect x="3" y="13" width="6" height="6" fill="#f0d870" stroke="#444" />
      <path d="M13 19v-7l6 7z" fill="#a01818" />
    </g>
  ),
  treeCyl: (
    <g>
      <rect x="3" y="2" width="8" height="9" rx="1.500" fill="#e4c0dc" stroke="#a02c88" strokeWidth="1.400" />
      <path d="M3 4h8" stroke="#a02c88" />
      <path d="M13 6h5" stroke="#222" />
      <path d="M5 12v9M5 16h5" stroke="#1a1aa8" strokeWidth="1.200" fill="none" />
      <circle cx="14" cy="15.500" r="3" fill="none" stroke="#a02c88" strokeWidth="1.200" />
      {Dot(14, 15.500, 1, "#a02c88")}
    </g>
  ),
  books: (
    <g>
      <path d="M3 8l3-4h5l-3 4zM8 7l3-3h5l-3 3zM13 7l3-3h4v13l-2 3V7z" fill="#d8d8d8" stroke="#7a7a7a" strokeWidth=".5" />
      <path d="M3 8h5v12H3z" fill="#f07818" stroke="#a05010" strokeWidth=".5" />
      <path d="M8 7h5v13H8z" fill="#30c030" stroke="#208020" strokeWidth=".5" />
      <path d="M13 7h5v13h-5z" fill="#3f80e0" stroke="#2050a0" strokeWidth=".5" />
    </g>
  ),
};

const WIDTHS: Record<string, string> = {
  "1": "w-px",
  "2": "w-[2px]",
  "3": "w-[3px]",
  "5": "w-[5px]",
  "6": "w-[6px]",
  "7": "w-[7px]",
  "8": "w-[8px]",
  "9": "w-[9px]",
  "10": "w-[10px]",
  "14": "w-[14px]",
  "21": "w-[21px]",
  "26": "w-[26px]",
  "27": "w-[27px]",
  "28": "w-[28px]",
  "30": "w-[30px]",
  "31": "w-[31px]",
  "36": "w-[36px]",
  "38": "w-[38px]",
  "40": "w-[40px]",
  "42": "w-[42px]",
  "44": "w-[44px]",
  "46": "w-[46px]",
  "56": "w-[56px]",
};

function Icon({ name }: { name: string }) {
  return (
    <svg width="22" height="22" viewBox="0 0 22 22" className="shrink-0">
      {ICONS[name]}
    </svg>
  );
}

function Caret() {
  return <span className="block h-0 w-0 border-x-[4px] border-t-[4px] border-x-transparent border-t-[#222]" />;
}

// Tokens: "name" is a 43px button, "name:28" a narrower one, "!name" a pressed one,
// "v" a dropdown arrow, "|" a separator, "_7" a blank of 7px.
function Tokens({ items }: { items: string[] }) {
  return (
    <>
      {items.map((t, i) => {
        if (t === "|")
          return (
            <div key={i} className="flex w-[6px] shrink-0 justify-center self-stretch py-[4px]">
              <div className="w-px bg-[#d2d2d2]" />
            </div>
          );
        if (t === "v")
          return (
            <div key={i} className="flex w-[14px] shrink-0 items-center justify-center">
              <Caret />
            </div>
          );
        if (t[0] === "_") return <div key={i} className={`shrink-0 ${WIDTHS[t.slice(1)]}`} />;
        if (t[0] === "!")
          return (
            <div key={i} className="flex h-[43px] w-[43px] shrink-0 items-center justify-center border border-[#a5c2bd] bg-[#c8d7d5]">
              <Icon name={t.slice(1)} />
            </div>
          );
        const [name, w] = t.split(":");
        return (
          <div key={i} className={`flex shrink-0 items-center justify-center ${w ? WIDTHS[w] : "w-[43px]"}`}>
            <Icon name={name} />
          </div>
        );
      })}
    </>
  );
}

function Group({ className, items, children }: { className: string; items?: string[]; children?: ReactNode }) {
  return (
    <div className={`relative flex h-full shrink-0 items-center border-r-2 border-b-2 border-[#e2e2e2] ${className}`}>
      <div className="absolute top-[4px] bottom-[5px] left-[4px] border-l-2 border-dotted border-[#b4b4b4]" />
      {children}
      {items && <Tokens items={items} />}
      <div className="mr-[9px] mb-[1px] ml-auto flex h-[19px] w-[14px] items-center justify-center self-end">
        <Caret />
      </div>
    </div>
  );
}

function Combo({ label, className }: { label: string; className: string }) {
  return (
    <div className={`flex h-[43px] shrink-0 items-center justify-between border border-[#aaa] pt-[2px] pr-[14px] pl-[2px] text-[11px] text-[#222] ${className}`}>
      <span>{label}</span>
      <Caret />
    </div>
  );
}

function Menu({ label, k, className = "" }: { label: string; k: string; className?: string }) {
  return (
    <span className={`shrink-0 ${className}`}>
      {label}(<span className="underline">{k}</span>)
    </span>
  );
}

function Side({ name }: { name: string }) {
  return (
    <div className="flex h-[55px] items-center justify-center pl-[8px]">
      <svg width="20" height="20" viewBox="0 0 22 22">
        {ICONS[name]}
      </svg>
    </div>
  );
}

function TitleBtns() {
  return (
    <svg width="92" height="16" viewBox="0 0 92 16" fill="none" stroke="#444" strokeWidth="1.600">
      <path d="M0 13h8" />
      <rect x="37.500" y="2.500" width="11" height="11" strokeWidth="1.200" />
      <path d="M75.500 2l11 11M86.500 2l-11 11" />
    </svg>
  );
}

function MenuBtns() {
  return (
    <svg width="92" height="16" viewBox="0 0 92 16" fill="none" stroke="#222" strokeWidth="1.600">
      <path d="M0 12h8" />
      <path d="M38 5.500h8v8h-8zM41 5.500V2.500h8v7h-3" strokeWidth="1.300" />
      <path d="M71.500 2l11 11M82.500 2l-11 11" />
    </svg>
  );
}

function Viewport() {
  return (
    <div className="relative flex-1 bg-gradient-to-b from-[#b3b4b6] via-[#e3e4e6] via-[75%] to-[#e7e8ea]">
      <svg viewBox="68 345 1699 429" className="absolute inset-0 h-full w-full" fill="none" fontFamily="Liberation Sans, sans-serif">
        <g stroke="#2020e8" strokeWidth="1">
          <path d="M911 585V470" />
          <path d="M907 584h8" />
          <path d="M911 521.700L963.300 506V568.300" />
          <path d="M911 521.700L953.300 541.700V603.300" stroke="#7a7af0" />
          <path d="M911 584L1000 556" />
          <path d="M911 584L988 621" />
          <path d="M963.300 568.300L1005.700 587.700L953.300 603.300" />
        </g>
        <g fill="#0808d8">
          <path d="M911 463l-3.500 15h7z" />
          <path d="M1015 552.700l-14-2.500 2 8z" />
          <path d="M995 622l-12-9-4 7z" />
        </g>
        <g fill="#3a3ae8" fontSize="13">
          <text x="906" y="460">Z</text>
          <text x="1016" y="557">Y</text>
          <text x="996" y="631">X</text>
        </g>
        <g>
          <path d="M110 719l11-7 10 5v15l-10 5-10-5z" fill="#d8d8d8" stroke="#b8b8b8" />
          <path d="M110 719l11 5 10-7M121 724v13" stroke="#c0c0c0" />
          <path d="M108 728V711" stroke="#1a3ce0" strokeWidth="2" />
          <path d="M108 707l-2 6h4z" fill="#1a3ce0" />
          <path d="M108 730l21-9" stroke="#a8c8a0" />
          <path d="M108 730l14 7" stroke="#d02020" strokeWidth="1.800" />
          <circle cx="107" cy="730" r="4" fill="#a8a8a8" stroke="#c8c8c8" />
          <text x="104" y="706" fontSize="11" fill="#4060e0">Z</text>
          <text x="131" y="727" fontSize="10" fill="#70a878">Y</text>
          <text x="124" y="745" fontSize="11" fill="#d84040">X</text>
        </g>
      </svg>
    </div>
  );
}

function Watermark() {
  return (
    <div className="pointer-events-none absolute top-[813px] left-[1472px] flex opacity-95">
      <svg width="81" height="95" viewBox="0 0 81 95" className="shrink-0">
        <path d="M41 0L81 23V71L41 95L0 71V23z" fill="#7accf0" />
        <path d="M41 0Q60 15 62 37L41 25L20 37V60Q15 72 18 82L0 71V23z" fill="#74a5db" />
        <path d="M0 23Q10 15 27 19M81 71Q70 82 52 76M60 9Q75 30 60 55" stroke="#e4f2fb" strokeWidth="1" fill="none" />
        <path d="M41 25L62 37V62L41 74L20 62V37z" fill="none" stroke="#fff" strokeWidth="4" />
        <path d="M41 29L58 39L41 49L24 39z" fill="#74a5db" />
        <path d="M24 39L41 49V70L24 60z" fill="#74a5db" />
        <path d="M58 39L41 49V70L58 60z" fill="#7accf0" />
      </svg>
      <div className="ml-[9px] flex w-[200px] flex-col pt-[15px] font-['Noto_Sans_CJK_SC',sans-serif] text-[#7dcdf2]">
        <div className="text-[48px] leading-[50px] font-medium whitespace-nowrap [text-shadow:0_0_2px_#fff]">3D世界网</div>
        <div className="font-['Liberation_Sans',sans-serif] text-[15px] leading-[12px] font-bold tracking-[5.200px] whitespace-nowrap">WWW.3DSJW.COM</div>
      </div>
    </div>
  );
}

export default function App() {
  return (
    <div className="relative h-[914px] w-[1771px] overflow-hidden border-x border-t border-x-[#a8a8a8] border-t-[#b0b0b0] bg-white pl-[2px] font-['Noto_Sans','Noto_Sans_CJK_SC',sans-serif] text-[#333]">
      {/* title bar */}
      <div className="flex h-[49px] items-center pl-[5px]">
        <span className="w-[37px] text-[22px] leading-none font-bold text-[#8a9bab]">NX</span>
        <div className="my-[5px] h-[41px] w-px bg-[#dcdcdc]" />
        <span className="ml-[4px] text-[13px] text-[#222]">
          NX 10 - 建模 - [_model1.prt （修改的）<span className="ml-[3px]">]</span>
        </span>
        <span className="ml-auto font-['Liberation_Sans',sans-serif] text-[13px] font-bold tracking-[0.4px] text-[#009a9a]">SIEMENS</span>
        <div className="mr-[14px] ml-[35px]">
          <TitleBtns />
        </div>
      </div>

      {/* menu bar */}
      <div className="relative ml-px flex h-[47px] w-[1763px] items-center bg-[#c8d7d5] pb-[2px] pl-[30px] text-[11px] text-[#333]">
        <div className="absolute top-[5px] bottom-[5px] left-[3px] border-l-2 border-dotted border-[#a9b6b4]" />
        <svg width="18" height="18" viewBox="0 0 18 18" className="absolute top-[14px] left-[8px]">
          <path d="M3 9l4-2V2l3-1v9l5-2v4l-7 4-5-3z" fill="#1d55c8" stroke="#123a90" strokeWidth=".6" />
          <path d="M5 3l3-1v6L5 9z" fill="#7fa5ee" />
        </svg>
        <div className="flex items-center gap-[14.500px]">
          <Menu label="文件" k="F" />
          <Menu label="编辑" k="E" />
          <Menu label="视图" k="V" />
          <Menu label="插入" k="S" />
          <Menu label="格式" k="R" />
          <Menu label="工具" k="T" />
          <Menu label="装配" k="A" />
          <Menu label="产品制造信息" k="M" />
          <Menu label="信息" k="I" />
          <Menu label="分析" k="L" />
          <Menu label="首选项" k="P" className="ml-[6px]" />
          <Menu label="窗口" k="O" />
          <span className="shrink-0">GC工具箱</span>
          <Menu label="帮助" k="H" />
        </div>
        <div className="mr-[8px] ml-auto">
          <MenuBtns />
        </div>
      </div>

      {/* row 1 */}
      <div className="flex h-[54px]">
        <Group className="w-[741px]">
          <div className="w-[10px] shrink-0" />
          <div className="flex w-[56px] shrink-0 items-center text-[11px] text-[#222]">
            <Icon name="globe" />
            <span className="shrink-0">启动</span>
            <span className="ml-[3px]">
              <Caret />
            </span>
          </div>
          <Tokens items={["doc", "open", "save", "|", "cut", "copy", "paste", "|", "undo:28", "_7", "v", "_7", "redo:44", "|", "star:28", "_7", "v", "_7", "|", "itag:40", "_3", "|", "_5"]} />
          <div className="flex h-[43px] w-[147px] shrink-0 items-center justify-between border border-[#aaa] pr-[7px] pl-[2px] text-[11px] text-[#222]">
            <span className="pt-[2px]">自定义</span>
            <svg width="18" height="18" viewBox="0 0 18 18" fill="none" stroke="#333" strokeWidth="1.200">
              <circle cx="11" cy="7" r="5" />
              <circle cx="11" cy="7" r="3" stroke="#999" />
              <path d="M7 11l-5 5 1 1 5-5z" fill="#fff" />
            </svg>
          </div>
        </Group>
        <Group className="w-[532px]" items={["fit", "v", "scan", "v", "cube", "v", "_6", "planeO", "planeG:30", "_6", "v", "graysq", "v", "_7", "|", "door1", "door2"]} />
        <Group className="w-[445px]" items={["_8", "list", "csys:26", "_9", "v", "_7", "|", "pdia", "palette", "_1", "|", "adia:28", "_7", "v", "_7", "|", "dist:30", "_6", "v", "_6", "ruler"]} />
      </div>

      {/* row 2 */}
      <div className="flex h-[47px]">
        <Group className="w-[797px]" items={["plane", "v", "_8", "ribs", "shell", "hole", "hexO", "gauge", "chev", "|", "umbrella", "bumps", "four", "halves", "seed:30", "_5", "v", "_21", "boxred:30", "sail", "slab", "frame"]}>
          <span className="absolute top-[0px] right-[10px] font-['Liberation_Sans',sans-serif] text-[12px] leading-[14px] font-bold text-[#222]">»</span>
        </Group>
        <Group className="w-[599px]" items={["pcMove", "v", "pcTri", "v", "_7", "pcX", "pcDoc:30", "_6", "v", "pcBox", "v", "pcDim:42", "v", "_8", "pcFrame", "pcTri:40", "pcPlus:36", "_3", "v"]} />
        <Group className="w-[368px]" items={["_8", "sf1", "sf2", "sf3", "mesh", "tool", "rbl", "wave:28", "_7", "v"]} />
      </div>

      {/* row 3 */}
      <div className="flex h-[47px]">
        <Group className="w-[401px]" items={["_8", "nodes", "stack", "list", "|", "ticket", "|", "chk1", "chk2", "chk3", "|", "term"]} />
        <Group className="w-[166px]" items={["_7", "a1", "a2", "hand"]} />
        <Group className="w-[217px]" items={["_7", "db", "spring", "washer", "_1", "|", "scis"]} />
        <Group className="w-[345px]" items={["_8", "tri", "table", "fcross", "fcirc", "note", "brush", "|", "bino"]} />
        <Group className="w-[123px]" items={["_7", "y2", "y3"]} />
      </div>

      {/* row 4 */}
      <div className="flex h-[47px]">
        <Group className="w-[788px]" items={["_8", "dimr", "|", "d0", "d1", "d2", "d3", "d4", "d5", "d6", "d7", "d8", "d9", "d10", "|", "rd1", "rd2", "|", "circd", "circd2", "back"]} />
      </div>

      {/* row 5 */}
      <div className="relative flex h-[53px] w-[1765px] items-center border-b-2 border-[#8f9a9a]">
        <div className="w-[6px] shrink-0" />
        <Combo label="没有选择过滤器" className="w-[166px]" />
        <div className="w-[7px] shrink-0" />
        <Combo label="整个装配" className="w-[173px] pl-[3px]" />
        <Tokens items={["_3", "comboF", "|", "fu", "fr:38", "_1", "v", "fb", "fh:40", "_2", "|", "dash:26", "_10", "v", "_7", "|", "gbox", "bbox", "|", "!t1", "!t2", "!t3", "t4", "!t5", "t6", "!t7", "t8", "!t9", "!t10", "surfpt", "|", "grid"]} />
        <div className="absolute right-[9px] bottom-[1px] flex h-[19px] w-[14px] items-center justify-center">
          <Caret />
        </div>
      </div>

      {/* side panel and graphics window */}
      <div className="flex h-[429px] w-[1765px] pl-px">
        <div className="flex w-[61px] shrink-0 flex-col items-center border-r border-[#a8a8a8] bg-[#dcdcdc]">
          <svg width="26" height="26" viewBox="0 0 26 26" className="mt-[7px] mr-[3px]" stroke="#222" fill="none">
            <circle cx="13" cy="13" r="8" strokeWidth="3" />
            <path d="M13 1v4M13 21v4M1 13h4M21 13h4M4.500 4.500l3 3M18.500 18.500l3 3M4.500 21.500l3-3M18.500 7.500l3-3" strokeWidth="3" />
            <circle cx="13" cy="13" r="1" fill="#222" />
          </svg>
          <div className="mt-[36px]">
            <Side name="treeCubes" />
            <Side name="sideMirror" />
            <Side name="treeCyl" />
            <Side name="books" />
          </div>
          <svg width="24" height="24" viewBox="0 0 24 24" className="mt-[39px] ml-[2px]" fill="none" stroke="#4a7fd6" strokeWidth="1.200">
            <circle cx="9" cy="15" r="6" fill="#1f6fd0" stroke="none" />
            <path d="M9 12v.500M9 14v5" stroke="#fff" strokeWidth="2" />
            <path d="M10 5c5 0 9 4 9 9M11 1c7 0 12 5 12 12" />
          </svg>
          <svg width="56" height="6" viewBox="0 0 56 6" className="mt-[3px]" fill="none" stroke="#777" strokeWidth="1">
            <path d="M0 1c3 2 5 3 9 3 8 0 16-2 24-3 8 0 14-1 22 0" />
          </svg>
          <div className="mt-[8px] flex flex-col items-center gap-[9px]">
            <span className="h-[7px] w-[8px] border-b border-[#bbb]">
              <span className="block h-0 w-0 border-x-[4px] border-b-[4px] border-x-transparent border-b-[#bbb]" />
            </span>
            <span className="h-0 w-0 border-x-[4px] border-b-[4px] border-x-transparent border-b-[#bbb]" />
            <span className="mt-[2px] h-0 w-0 border-x-[4px] border-t-[4px] border-x-transparent border-t-[#222]" />
            <span className="mt-[2px] h-[7px] w-[8px] border-t border-[#222] pt-px">
              <span className="block h-0 w-0 border-x-[4px] border-t-[4px] border-x-transparent border-t-[#222]" />
            </span>
          </div>
        </div>
        <div className="w-[3px] shrink-0 bg-white" />
        <Viewport />
      </div>

      {/* row 6 */}
      <div className="flex h-[47px]">
        <Group className="w-[671px]" items={["_10", "q1", "q2:26", "_9", "v", "q3", "v", "q4", "v", "q5", "v", "erase", "v", "q6", "v", "q7", "v", "q8:56", "q9:30"]} />
      </div>

      {/* row 7 */}
      <div className="flex h-[47px] w-[1765px] border-b-2 border-[#b0b0b0]">
        <Group className="w-[641px] !border-b-0" items={["_2", "bk", "v", "_6", "net", "gpage", "cplus:27", "_8", "v", "_8", "corner", "mirror", "perp", "|", "pipe", "c3", "link", "|", "drawer", "|", "rings"]}>
          <span className="absolute top-0 right-[11px] font-['Liberation_Sans',sans-serif] text-[12px] leading-[14px] font-bold text-[#222]">»</span>
        </Group>
        <Group className="w-[1124px] !border-r-0 !border-b-0">
          <Tokens items={["_7", "sk"]} />
          <div className="flex w-[72px] shrink-0 items-center text-[11px] text-[#c4c4c4]">
            <svg width="16" height="18" viewBox="0 0 16 18" className="shrink-0">
              <rect x="1" y="2" width="14" height="15" fill="#d4d4d4" stroke="#bbb" />
              <path d="M4 5h3v3H4zM10 5h3v3h-3zM7 8h3v3H7zM4 11h3v3H4zM10 11h3v3h-3z" fill="#f4f4f4" />
            </svg>
            <span className="ml-[2px] shrink-0 tracking-[0.2px]">完成草图</span>
          </div>
          <Tokens items={["s1", "s2", "s3", "s4", "s5", "s6", "s7", "s8", "s9", "s10:28", "_7", "v", "_7", "|", "g1", "g2", "g3", "g4", "v", "_7", "|", "g5", "g6:46", "g7:30", "_2", "v", "_7", "|", "g8", "g9", "g10:40"]} />
        </Group>
      </div>

      {/* status area */}
      <div className="flex h-[38px] items-center justify-end gap-[7px] pr-[56px]">
        <svg width="22" height="22" viewBox="0 0 22 22">
          <rect x="2" y="11" width="16" height="7" fill="#ddd" />
          <path d="M7 3l5 6M12 3L7 9" stroke="#999" />
        </svg>
        <svg width="22" height="22" viewBox="0 0 22 22">
          <path d="M1 5V1h4M17 1h4v4M21 17v4h-4M5 21H1v-4" stroke="#666" fill="none" />
          <path d="M5 16l8-11 4 11z" fill="#4f6cc0" />
        </svg>
      </div>
      <div className="h-[8px] border-t border-[#a8a8a8] bg-[#c8d7d5]" />

      {/* app launcher popup */}
      <div className="absolute top-[173px] left-[345px] grid h-[45px] w-[45px] grid-cols-3 content-center justify-items-center gap-[2px] border border-[#b0b0b0] bg-white pr-[10px] pl-[9px]">
        <div className="h-[6px] w-[6px] bg-[#8fd0d2]" />
        <div className="h-[6px] w-[6px] bg-[#8fd0d2]" />
        <div className="h-[6px] w-[6px] bg-[#8fd0d2]" />
        <div className="h-[6px] w-[6px] bg-[#2a939b]" />
        <div className="h-[6px] w-[6px] bg-[#2a939b]" />
        <div className="h-[6px] w-[6px] bg-[#2a939b]" />
        <div className="h-[6px] w-[6px] bg-[#1f8a92]" />
        <div className="h-[6px] w-[6px] bg-[#1f8a92]" />
        <div className="h-[6px] w-[6px] bg-[#1f8a92]" />
      </div>

      <Watermark />

      {/* scroll pill */}
      <div className="absolute top-[796px] right-0 flex h-[42px] w-[22px] flex-col items-center justify-around rounded-l-[20px] bg-[#2a3239]">
        <svg width="10" height="10" viewBox="0 0 10 10" fill="none" stroke="#2f9ed8" strokeWidth="2">
          <path d="M5 9V2M1.500 5L5 1.500 8.500 5" />
        </svg>
        <svg width="10" height="10" viewBox="0 0 10 10" fill="none" stroke="#30a838" strokeWidth="2">
          <path d="M5 1v7M1.500 5L5 8.500 8.500 5" />
        </svg>
      </div>
    </div>
  );
}
